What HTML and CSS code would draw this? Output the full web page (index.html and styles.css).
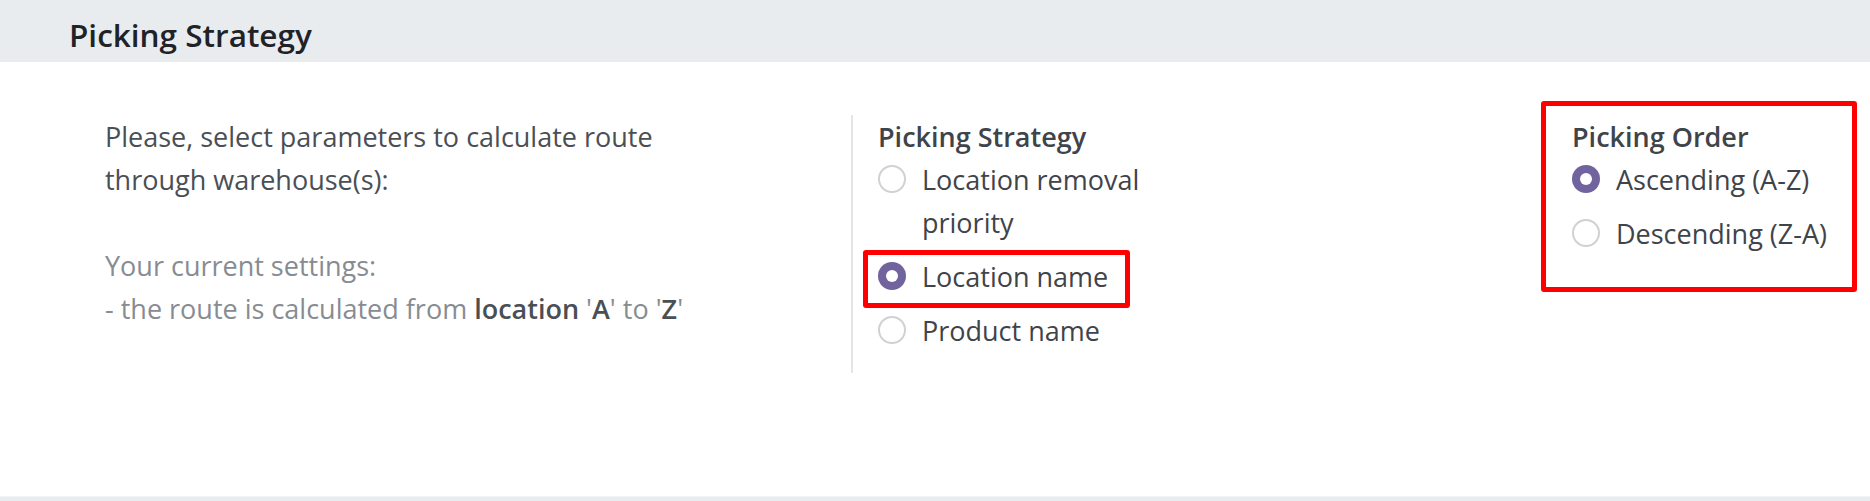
FILE: index.html
```html
<!DOCTYPE html>
<html lang="en">
<head>
<meta charset="utf-8">
<title>Picking Strategy</title>
<link rel="stylesheet" href="styles.css">
</head>
<body>
<div class="page">
  <div class="section-header">
    <h2 class="section-title">Picking Strategy</h2>
  </div>
  <div class="section-body">
    <div class="col-left">
      <p class="desc">Please, select parameters to calculate route through warehouse(s):</p>
      <p class="settings">Your current settings:<br>- the route is calculated from <b>location</b> '<b>A</b>' to '<b>Z</b>'</p>
    </div>
    <div class="col-mid">
      <div class="field-label">Picking Strategy</div>
      <div class="radio-list strategy">
        <div class="radio-item"><span class="radio"></span><span class="radio-text">Location removal priority</span></div>
        <div class="radio-item marked"><span class="radio checked"></span><span class="radio-text">Location name</span></div>
        <div class="radio-item"><span class="radio"></span><span class="radio-text">Product name</span></div>
      </div>
    </div>
    <div class="col-right">
      <div class="field-label">Picking Order</div>
      <div class="radio-list">
        <div class="radio-item"><span class="radio checked"></span><span class="radio-text">Ascending (A-Z)</span></div>
        <div class="radio-item"><span class="radio"></span><span class="radio-text">Descending (Z-A)</span></div>
      </div>
    </div>
  </div>
  <div class="section-header next"></div>
</div>
</body>
</html>
```
FILE: styles.css
```css
html, body {
  margin: 0;
  padding: 0;
  background: #ffffff;
}

body {
  font-family: "Open Sans", "Noto Sans", sans-serif;
  color: #4a4f55;
  width: 1870px;
  height: 501px;
  overflow: hidden;
}

.page {
  display: flex;
  flex-direction: column;
}

.section-header {
  height: 62px;
  box-sizing: border-box;
  background: #e9ecef;
  padding: 16px 0 0 69px;
}

.section-header.next {
  height: 10px;
  border-top: 1px solid #f1f3f5;
  padding: 0;
}

.section-title {
  margin: 0;
  font-size: 31.5px;
  line-height: 1.2;
  font-weight: 600;
  color: #1f2328;
}

.section-body {
  height: 434px;
  box-sizing: border-box;
  display: flex;
  align-items: flex-start;
  padding: 53px 0 0 105px;
}

.col-left {
  width: 746px;
  font-size: 27px;
  line-height: 43px;
}

.desc {
  margin: 0;
  width: 580px;
  color: #4a4f55;
}

.settings {
  margin: 43px 0 0 0;
  color: #878c92;
}

.settings b {
  font-weight: 600;
  color: #4a4f55;
}

.col-mid {
  width: 690px;
  box-sizing: border-box;
  border-left: 2px solid #e3e6e9;
  padding: 0 0 21px 25px;
  font-size: 27px;
  line-height: 43px;
}

.field-label {
  font-weight: 600;
  color: #3f444a;
}

.radio-list {
  display: flex;
  flex-direction: column;
  gap: 11px;
}

.radio-list.strategy {
  width: 304px;
}

.radio-item {
  display: flex;
  align-items: flex-start;
  gap: 16px;
  position: relative;
  color: #3f444a;
}

.radio {
  flex: none;
  width: 28px;
  height: 28px;
  margin-top: 7px;
  box-sizing: border-box;
  border: 2px solid #cfd1d3;
  border-radius: 50%;
  background: #ffffff;
  position: relative;
}

.radio.checked {
  border: none;
  background: #71639e;
}

.radio.checked::after {
  content: "";
  position: absolute;
  left: 8px;
  top: 8px;
  width: 12px;
  height: 12px;
  border-radius: 50%;
  background: #ffffff;
}

.radio-item.marked::before {
  content: "";
  position: absolute;
  left: -15px;
  top: -5px;
  width: 267px;
  height: 58px;
  box-sizing: border-box;
  border: 5px solid #ff0000;
  border-radius: 3px;
  pointer-events: none;
}

.col-right {
  width: 316px;
  height: 191px;
  box-sizing: border-box;
  margin-top: -14px;
  border: 5px solid #ff0000;
  border-radius: 3px;
  padding: 9px 10px 0 26px;
  font-size: 27px;
  line-height: 43px;
}
```
